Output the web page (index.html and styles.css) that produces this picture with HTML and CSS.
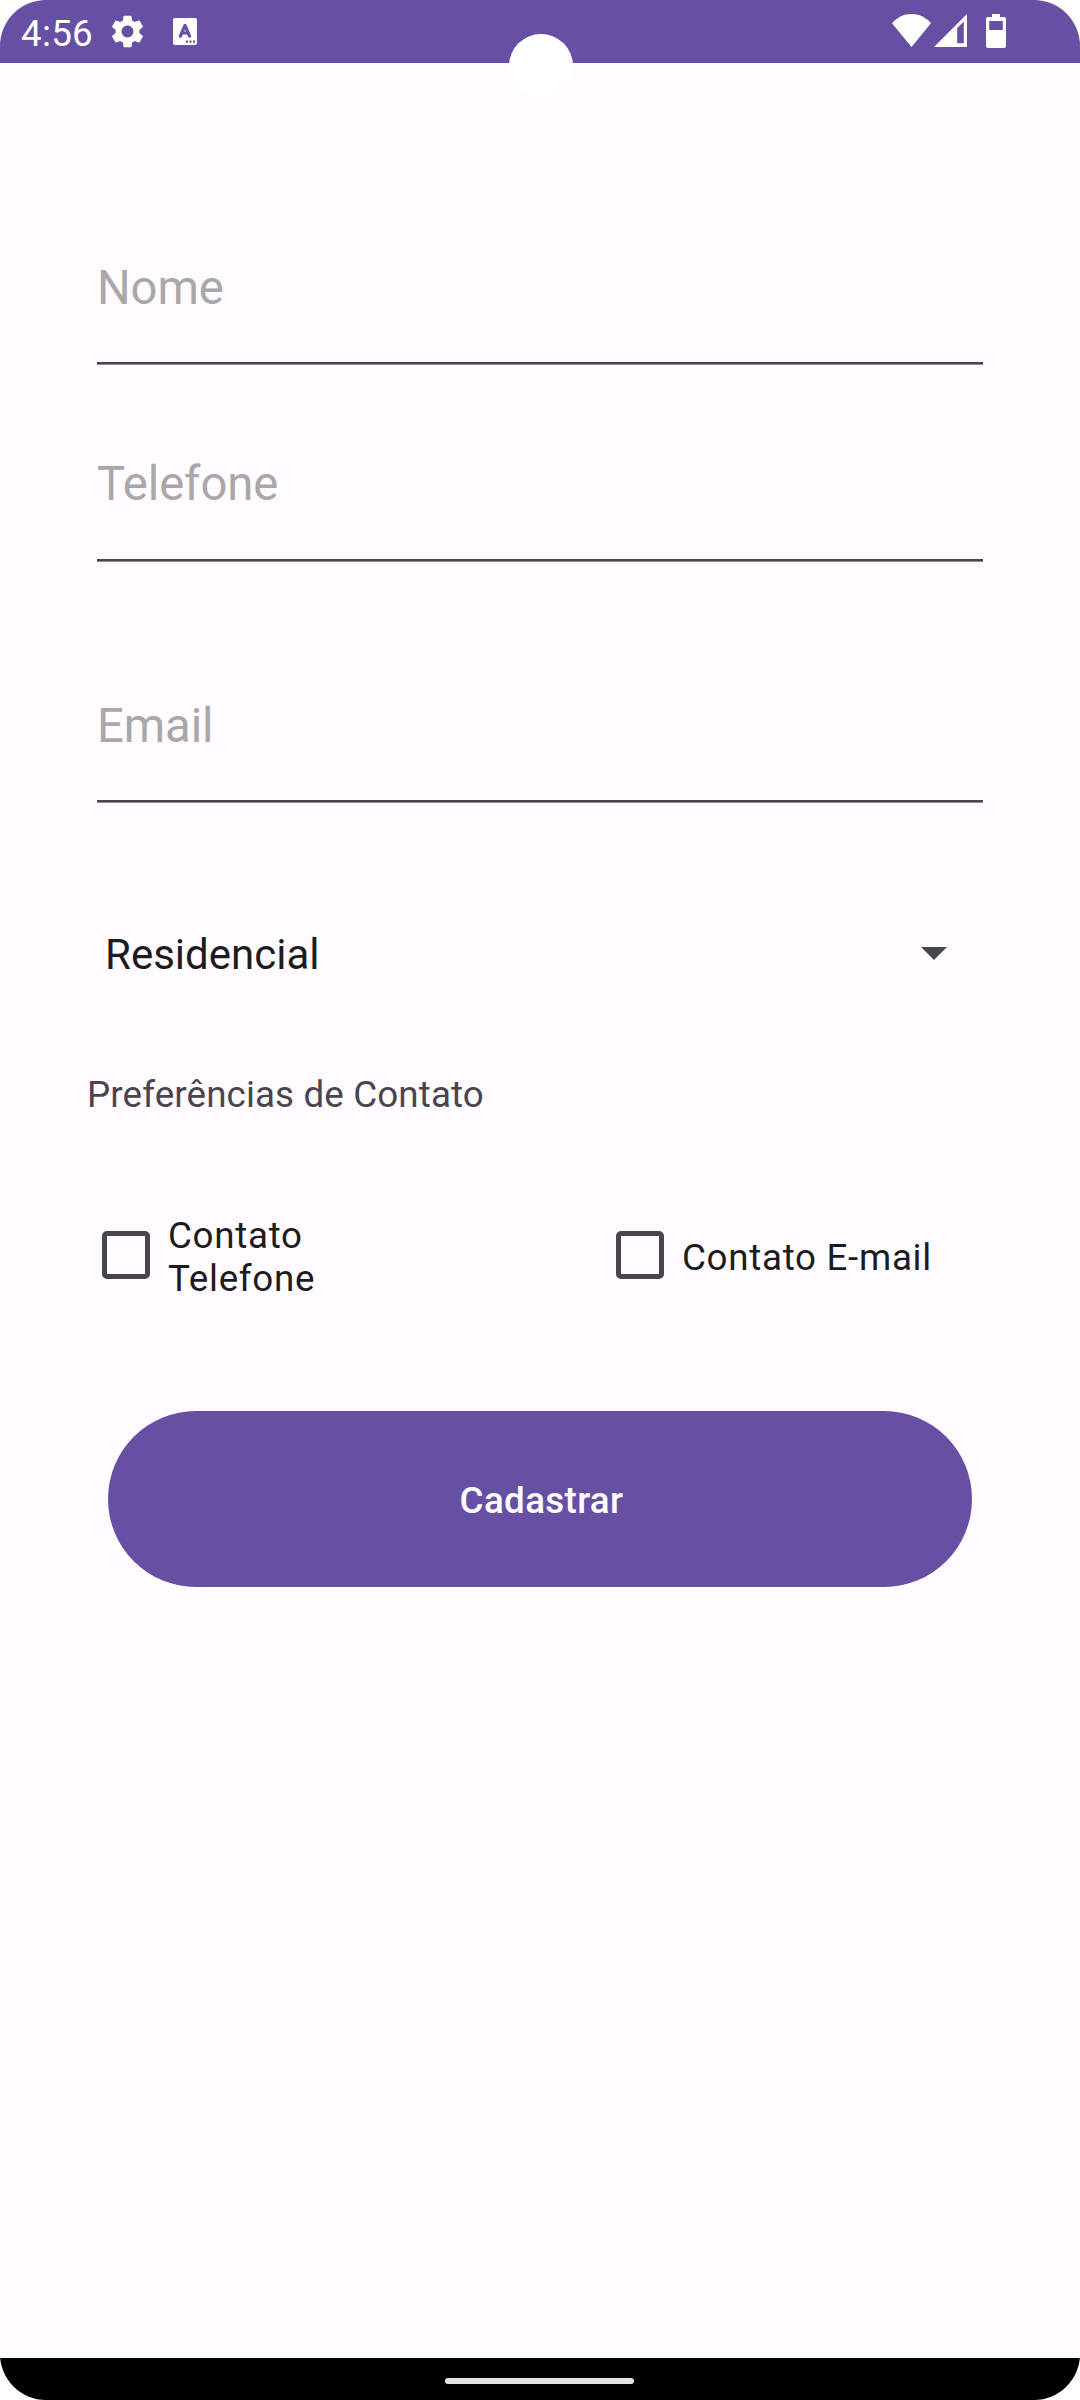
FILE: index.html
```html
<!DOCTYPE html>
<html lang="pt-BR">
<head>
<meta charset="utf-8">
<title>Cadastro</title>
<link rel="stylesheet" href="styles.css">
</head>
<body>
<div class="screen">
  <header class="status-bar">
    <span class="clock">4:56</span>
    <svg class="icon-gear" viewBox="2 2 20 20"><path d="M19.14 12.94c.04-.3.06-.61.06-.94 0-.32-.02-.64-.07-.94l2.03-1.58c.18-.14.23-.41.12-.61l-1.92-3.32c-.12-.22-.37-.29-.59-.22l-2.39.96c-.5-.38-1.03-.7-1.62-.94l-.36-2.54c-.04-.24-.24-.41-.48-.41h-3.84c-.24 0-.43.17-.47.41l-.36 2.54c-.59.24-1.13.57-1.62.94l-2.39-.96c-.22-.08-.47 0-.59.22L2.74 8.87c-.12.21-.08.47.12.61l2.03 1.58c-.05.3-.09.63-.09.94s.02.64.07.94l-2.03 1.58c-.18.14-.23.41-.12.61l1.92 3.32c.12.22.37.29.59.22l2.39-.96c.5.38 1.03.7 1.62.94l.36 2.54c.05.24.24.41.48.41h3.84c.24 0 .44-.17.47-.41l.36-2.54c.59-.24 1.13-.56 1.62-.94l2.39.96c.22.08.47 0 .59-.22l1.92-3.32c.12-.22.07-.47-.12-.61l-2.01-1.58zM12 15.6c-1.98 0-3.6-1.62-3.6-3.6s1.62-3.6 3.6-3.6 3.6 1.62 3.6 3.6-1.62 3.6-3.6 3.6z"/></svg>
    <svg class="icon-keyboard" viewBox="0 0 24 27"><rect width="24" height="27" rx="1.8"/><path class="cut-line" d="M7.400 18.200L12 7.400l4.600 10.800M9 15h6"/><path class="cut" d="M13 22.500h2v2.200h-2zM16.500 22.500h2v2.200h-2zM20 22.500h2v2.200h-2z"/></svg>
    <span class="spacer"></span>
    <svg class="icon-wifi" viewBox="0 0 39 33"><path d="M0 9.2C5.400 3.200 12 0 19.500 0S33.600 3.200 39 9.200L19.500 33z"/></svg>
    <svg class="icon-signal" viewBox="0 0 33 33"><path fill-rule="evenodd" d="M33 0v33H0zM23.200 14v15.200h6.600V7.400z"/></svg>
    <svg class="icon-battery" viewBox="0 0 20 34"><path fill-rule="evenodd" d="M6 0h8v3h4q2 0 2 2v27q0 2-2 2H2q-2 0-2-2V5q0-2 2-2h4zM3.200 7v9h13.600V7z"/></svg>
  </header>
  <div class="camera"></div>
  <main class="form">
    <input class="field" type="text" placeholder="Nome">
    <input class="field field-phone" type="text" placeholder="Telefone">
    <input class="field field-email" type="text" placeholder="Email">
    <div class="spinner">
      <span>Residencial</span>
      <svg class="icon-arrow" viewBox="0 0 26 13"><path d="M0 0h26L13 13z"/></svg>
    </div>
    <p class="section-label">Preferências de Contato</p>
    <div class="options">
      <label class="option"><input class="box" type="checkbox"><span>Contato<br>Telefone</span></label>
      <label class="option"><input class="box" type="checkbox"><span>Contato E-mail</span></label>
    </div>
    <button class="submit">Cadastrar</button>
  </main>
  <footer class="nav-bar"><div class="handle"></div></footer>
</div>
</body>
</html>
```
FILE: styles.css
```css
* {
  box-sizing: border-box;
}

body {
  margin: 0;
  background: #fff;
  font-family: Roboto, sans-serif;
}

.screen {
  position: relative;
  display: flex;
  flex-direction: column;
  width: 1080px;
  height: 2400px;
  overflow: hidden;
  border-radius: 46px;
  background: #fffbfe;
}

.status-bar {
  display: flex;
  align-items: flex-start;
  height: 63px;
  padding: 0 74px 0 21px;
  background: #6750a4;
  color: #fff;
  fill: #fff;
}

.clock {
  width: 89.5px;
  margin-top: 12px;
  font-size: 36.75px;
  letter-spacing: 0.3px;
  line-height: 43px;
}

.icon-gear {
  width: 33px;
  height: 33px;
  margin-top: 15px;
}

.icon-keyboard {
  width: 24px;
  height: 27px;
  margin: 18px 0 0 29.5px;
}

.cut {
  fill: #6750a4;
}

.cut-line {
  fill: none;
  stroke: #6750a4;
  stroke-width: 3.2;
  stroke-linejoin: round;
  stroke-linecap: round;
}

.spacer {
  flex: 1;
}

.icon-wifi {
  width: 39px;
  height: 33px;
  margin-top: 14px;
}

.icon-signal {
  width: 33px;
  height: 33px;
  margin: 14px 0 0 3px;
}

.icon-battery {
  width: 20px;
  height: 34px;
  margin: 14px 0 0 19px;
}

.camera {
  position: absolute;
  top: 34px;
  left: 509px;
  width: 64px;
  height: 64px;
  border-radius: 50%;
  background: #fff;
}

.form {
  display: flex;
  flex: 1;
  flex-direction: column;
  padding: 187px 97px 0;
}

.field {
  height: 114px;
  padding: 0 0 36px;
  border: 0;
  border-bottom: 2px solid #49454f;
  border-radius: 0;
  outline: 0;
  background: transparent;
  box-shadow: 0 1px 0 #8f8c93;
  font: 47.25px Roboto, sans-serif;
  letter-spacing: -0.1px;
}

.field::placeholder {
  color: #a9a7a9;
  opacity: 1;
}

.field-phone {
  margin-top: 83px;
  padding-bottom: 38px;
}

.field-email {
  margin-top: 127px;
}

.spinner {
  display: flex;
  align-items: center;
  justify-content: space-between;
  height: 64px;
  margin-top: 120px;
  padding: 0 36.5px 0 8px;
  color: #1c1b1f;
  font-size: 42px;
}

.icon-arrow {
  width: 26px;
  height: 13px;
  margin-bottom: 2px;
  fill: #49454f;
}

.section-label {
  margin: 87px 0 0 -10px;
  color: #49454f;
  font-size: 36.75px;
  letter-spacing: 0.13px;
  line-height: 43px;
}

.options {
  display: grid;
  grid-template-columns: 514px 1fr;
  margin: 98px 0 0 5px;
}

.option {
  display: flex;
  align-items: center;
  gap: 18px;
  color: #1c1b1f;
  font-size: 36.75px;
  letter-spacing: 0.7px;
  line-height: 43px;
}

.box {
  position: relative;
  top: -2px;
  width: 48px;
  height: 48px;
  margin: 0;
  border: 5px solid #49454f;
  border-radius: 5px;
  appearance: none;
}

.submit {
  height: 176px;
  margin: 111px 11px 0;
  padding: 2px 0 0 3px;
  border: 0;
  border-radius: 88px;
  background: #6750a4;
  color: #fff;
  font: 500 36.75px Roboto, sans-serif;
  letter-spacing: 0.35px;
}

.nav-bar {
  display: flex;
  justify-content: center;
  height: 42px;
  padding: 20px 2px 0 0;
  background: #000;
}

.handle {
  width: 189px;
  height: 6px;
  border-radius: 3px;
  background: #e6e1e5;
}
```
